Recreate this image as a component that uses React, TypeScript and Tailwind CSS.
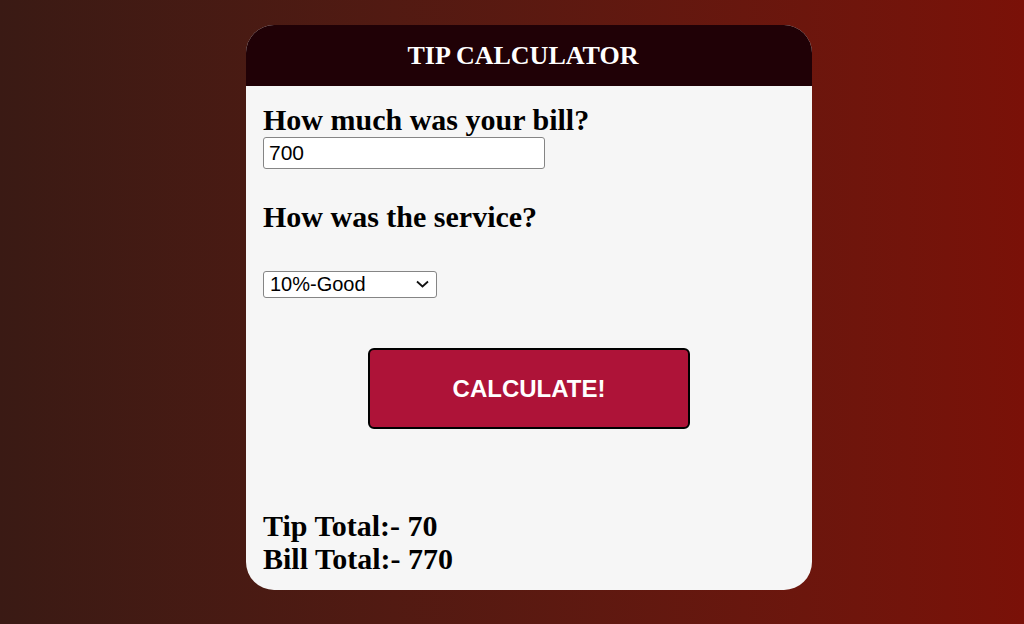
export default function App() {
  return (
    <div className="flex h-[624px] w-full justify-center bg-gradient-to-r from-[#3a1a14] to-[#7a1108] pt-[25px] pl-[34px]">
      <div className="flex h-[565px] w-[566px] flex-col overflow-hidden rounded-[28px] bg-[#f6f6f6]">
        <div className="flex h-[61px] items-center justify-center bg-[#200106] pr-[12px]">
          <h1 className="font-['Liberation_Serif',serif] text-[26px] font-bold text-white">TIP CALCULATOR</h1>
        </div>
        <div className="flex flex-1 flex-col px-[17px] font-['Liberation_Serif',serif] text-black">
          <h2 className="mt-[16px] text-[30px] leading-[35px] font-bold">How much was your bill?</h2>
          <input
            type="text"
            defaultValue="700"
            className="h-[32px] w-[282px] rounded-[3px] border border-[#858585] bg-white px-[5px] font-['Liberation_Sans',sans-serif] text-[21px] outline-none"
          />
          <h2 className="mt-[30px] text-[30px] leading-[35px] font-bold">How was the service?</h2>
          <div className="relative mt-[37px] w-[174px]">
            <select
              defaultValue="10"
              className="h-[27px] w-[174px] appearance-none rounded-[3px] border border-[#858585] bg-white pl-[6px] font-['Liberation_Sans',sans-serif] text-[20px] leading-[25px] outline-none"
            >
              <option value="30">30%-Outstanding</option>
              <option value="20">20%-Great</option>
              <option value="10">10%-Good</option>
              <option value="5">5%-Bad</option>
            </select>
            <svg className="pointer-events-none absolute top-[9px] right-[8px]" width="13" height="8" viewBox="0 0 13 8">
              <path d="M1 1.5 L6.5 6.5 L12 1.5" fill="none" stroke="#111" strokeWidth="1.8" />
            </svg>
          </div>
          <div className="mt-[50px] flex justify-center">
            <button className="h-[81px] w-[322px] rounded-[6px] border-2 border-black bg-[#ae1338] font-['Liberation_Sans',sans-serif] text-[24px] font-bold text-white">
              CALCULATE!
            </button>
          </div>
          <div className="mt-[80px] text-[30px] leading-[33px] font-bold">
            <p>Tip Total:- 70</p>
            <p>Bill Total:- 770</p>
          </div>
        </div>
      </div>
    </div>
  );
}
